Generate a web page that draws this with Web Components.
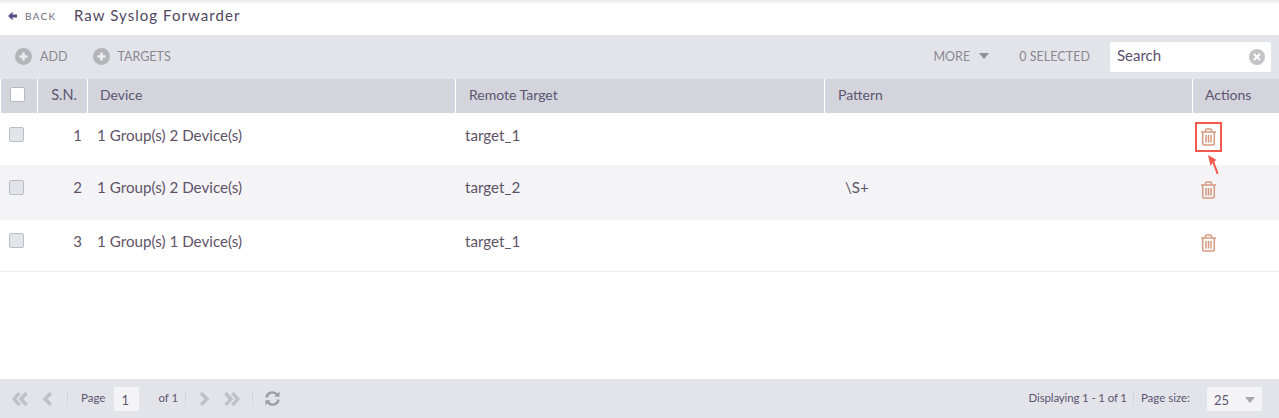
<!DOCTYPE html>
<html>
<head>
<meta charset="utf-8">
<title>Raw Syslog Forwarder</title>
<style>
  html, body { margin: 0; height: 418px; overflow: hidden; background: #fff; }
  body { display: flex; flex-direction: column; font-family: Lato, sans-serif; color: #5a4f6e; }
</style>
</head>
<body>
<title-bar heading="Raw Syslog Forwarder"></title-bar>
<tool-bar></tool-bar>
<grid-row header>
  <span slot="check"><check-box white></check-box></span>
  <span slot="sn">S.N.</span>
  <span slot="device">Device</span>
  <span slot="target">Remote Target</span>
  <span slot="pattern">Pattern</span>
  <span slot="actions">Actions</span>
</grid-row>
<grid-row style="height:52px" offset="-4.5">
  <span slot="check"><check-box></check-box></span>
  <span slot="sn">1</span>
  <span slot="device">1 Group(s) 2 Device(s)</span>
  <span slot="target">target_1</span>
  <span slot="actions"><trash-icon marked></trash-icon></span>
</grid-row>
<grid-row style="height:55px" alt offset="-5.5">
  <span slot="check"><check-box></check-box></span>
  <span slot="sn">2</span>
  <span slot="device">1 Group(s) 2 Device(s)</span>
  <span slot="target">target_2</span>
  <span slot="pattern">\S+</span>
  <span slot="actions"><trash-icon></trash-icon></span>
</grid-row>
<grid-row style="height:51px;border-bottom:1px solid #f0f0f3" offset="-5">
  <span slot="check"><check-box></check-box></span>
  <span slot="sn">3</span>
  <span slot="device">1 Group(s) 1 Device(s)</span>
  <span slot="target">target_1</span>
  <span slot="actions"><trash-icon></trash-icon></span>
</grid-row>
<pager-bar></pager-bar>

<script>
class TitleBar extends HTMLElement {
  constructor() {
    super();
    this.attachShadow({ mode: "open" });
    this.shadowRoot.innerHTML = `
      <style>
        :host {
          display: flex;
          align-items: center;
          height: 35px;
          flex: none;
          box-sizing: border-box;
          padding: 0 0 3px 8px;
          background: linear-gradient(#e9e9ec, #fff 4px);
        }
        svg { width: 10px; height: 10px; margin-right: 7px; }
        .back { font-size: 10px; letter-spacing: 1.3px; color: #6f6a7c; width: 49px; }
        .name { font-size: 15px; letter-spacing: 1.05px; color: #4f4660; margin-top: -2px; }
      </style>
      <svg viewBox="0 0 10 10"><path d="M0 5 L4.6 .8 V3.4 H9 V6.6 H4.6 V9.2 Z" fill="#5b4f86"/></svg>
      <span class="back">BACK</span>
      <span class="name">${this.getAttribute("heading")}</span>
    `;
  }
}

const plusIcon = `<svg width="17" height="17" viewBox="0 0 17 17"><circle cx="8.5" cy="8.5" r="8.5" fill="#b4b4b8"/><path d="M8.5 4.5v8M4.5 8.5h8" stroke="#ecedf0" stroke-width="2.6"/></svg>`;

class ToolBar extends HTMLElement {
  constructor() {
    super();
    this.attachShadow({ mode: "open" });
    this.shadowRoot.innerHTML = `
      <style>
        :host {
          display: flex;
          align-items: center;
          height: 44px;
          flex: none;
          box-sizing: border-box;
          padding-bottom: 2px;
          background: #e3e4ea;
          font-size: 12.5px;
          color: #8b8790;
        }
        svg { flex: none; }
        .add { margin-left: 15px; display: flex; align-items: center; gap: 8px; }
        .targets { margin-left: 26px; display: flex; align-items: center; gap: 7px; }
        .spacer { flex: 1; }
        .more { display: flex; align-items: center; gap: 9px; }
        .sel { margin-left: 30px; letter-spacing: 0.05px; }
        .search {
          display: flex;
          align-items: center;
          justify-content: space-between;
          box-sizing: border-box;
          width: 161px;
          height: 30px;
          margin: 2px 8px 0 20px;
          padding: 0 6px 0 7px;
          background: #fff;
          border-radius: 2px;
          font-size: 15px;
          color: #5a4f6e;
        }
        .search span { margin-bottom: 4px; }
      </style>
      <span class="add">${plusIcon}ADD</span>
      <span class="targets">${plusIcon}TARGETS</span>
      <span class="spacer"></span>
      <span class="more">MORE <svg width="10" height="6" viewBox="0 0 10 6"><path d="M0 0h10L5 6z" fill="#8f8f98"/></svg></span>
      <span class="sel">0 SELECTED</span>
      <span class="search"><span>Search</span>
        <svg width="16" height="16" viewBox="0 0 16 16"><circle cx="8" cy="8" r="8" fill="#c4c4c8"/><path d="M5 5l6 6M11 5l-6 6" stroke="#fff" stroke-width="2"/></svg>
      </span>
    `;
  }
}

class GridRow extends HTMLElement {
  constructor() {
    super();
    this.attachShadow({ mode: "open" });
    const header = this.hasAttribute("header");
    const alt = this.hasAttribute("alt");
    const offset = this.getAttribute("offset") || "0";
    this.shadowRoot.innerHTML = `
      <style>
        :host {
          display: grid;
          grid-template-columns: 37px 50px 368px 369px 368px 1fr;
          flex: none;
          box-sizing: content-box;
          ${header ? "height: 34px;" : ""}
          background: ${header ? "#d3d4dc" : alt ? "#f4f4f7" : "#fff"};
          font-size: ${header ? "14px" : "15.2px"};
          color: ${header ? "#5d5470" : "#5f5268"};
        }
        .c {
          display: flex;
          align-items: center;
          box-sizing: border-box;
          min-width: 0;
          padding-bottom: ${header ? "4" : -offset * 2}px;
          ${header ? "border-left: 1px solid #fff;" : ""}
        }
        .c:first-child { border-left: 0; padding-bottom: ${header ? "2" : -offset * 2}px; }
        .check { padding-left: 9px; }
        .sn { justify-content: flex-end; padding-right: ${header ? "10px" : "5px"}; font-size: ${header ? "14.5px" : "15px"}; }
        .device { padding-left: ${header ? "12px" : "10px"}; }
        .target { padding-left: ${header ? "13px" : "10px"}; }
        .pattern { padding-left: ${header ? "13px" : "21px"}; }
        .actions { padding-left: ${header ? "12px" : "3px"}; }
      </style>
      <div class="c check"><slot name="check"></slot></div>
      <div class="c sn"><slot name="sn"></slot></div>
      <div class="c device"><slot name="device"></slot></div>
      <div class="c target"><slot name="target"></slot></div>
      <div class="c pattern"><slot name="pattern"></slot></div>
      <div class="c actions"><slot name="actions"></slot></div>
    `;
  }
}

class CheckBox extends HTMLElement {
  constructor() {
    super();
    this.attachShadow({ mode: "open" });
    const white = this.hasAttribute("white");
    this.shadowRoot.innerHTML = `
      <style>
        :host {
          display: block;
          box-sizing: border-box;
          width: 15px;
          height: 15px;
          border-radius: 2px;
          border: 1px solid ${white ? "#b8b8c0" : "#bcbcc4"};
          background: ${white ? "#fff" : "#e3e4ea"};
        }
      </style>
    `;
  }
}

class TrashIcon extends HTMLElement {
  constructor() {
    super();
    this.attachShadow({ mode: "open" });
    this.shadowRoot.innerHTML = `
      <style>
        :host {
          display: block;
          position: relative;
          width: 27px;
          height: 30px;
          box-sizing: border-box;
          padding: 6px 0 0 5px;
          margin-top: 5px;
        }
        :host([marked]) { outline: 2px solid #f4594d; outline-offset: -2px; }
        svg { display: block; }
        .arrow { position: absolute; left: 12px; top: 32px; }
      </style>
      <svg width="17" height="18" viewBox="0 0 17 18" fill="none" stroke="#d69a80" stroke-width="1.5">
        <path d="M1 4h15M5.5 4V2Q5.5 1 6.7 1h3.6q1.2 0 1.2 1V4"/>
        <path d="M2.7 4v11.5q0 1.5 1.5 1.5h8.6q1.5 0 1.5-1.5V4"/>
        <path d="M6 7v7.5M8.5 7v7.5M11 7v7.5"/>
      </svg>
      ${this.hasAttribute("marked") ? `<svg class="arrow" width="12" height="21" viewBox="0 0 12 21"><path d="M1 1L9.5 6 7.2 7.5 11.5 19.5 9.7 20.2 5.5 8.8 3.5 12Z" fill="#f4594d"/></svg>` : ""}
    `;
  }
}

class PagerBar extends HTMLElement {
  constructor() {
    super();
    this.attachShadow({ mode: "open" });
    const chev = (d, w) => `<svg width="${w}" height="16" viewBox="0 0 ${w} 16" fill="none" stroke="#c0c0c5" stroke-width="3.4"><path d="${d}"/></svg>`;
    this.shadowRoot.innerHTML = `
      <style>
        :host {
          display: flex;
          align-items: center;
          height: 39px;
          flex: none;
          margin-top: auto;
          background: #e3e4ea;
          font-size: 11.5px;
          color: #5d5470;
        }
        svg { flex: none; display: block; }
        .sep { width: 0; height: 14px; border-left: 1px dotted #c8c8ce; flex: none; }
        .page-in {
          box-sizing: border-box;
          width: 25px;
          height: 24px;
          margin-left: 9px;
          padding: 5px 0 0 7px;
          background: #f4f4f6;
          font-size: 13px;
        }
        .size {
          display: flex;
          align-items: center;
          justify-content: space-between;
          box-sizing: border-box;
          width: 55px;
          height: 24px;
          margin: 0 17px 0 17px;
          padding: 2px 7px 0 7px;
          background: #f4f4f6;
          font-size: 13px;
        }
        .spacer { flex: 1; }
      </style>
      <span style="margin-left:12px">${chev("M7.5 2L2 8l5.5 6M14.5 2L9 8l5.5 6", 16)}</span>
      <span style="margin-left:14px">${chev("M9 2L3 8l6 6", 11)}</span>
      <span class="sep" style="margin-left:14px"></span>
      <span style="margin-left:13px;margin-bottom:2px">Page</span>
      <span class="page-in">1</span>
      <span style="margin-left:19px;margin-bottom:2px">of 1</span>
      <span class="sep" style="margin-left:7px"></span>
      <span style="margin-left:13px">${chev("M2 2l6 6-6 6", 11)}</span>
      <span style="margin-left:14px">${chev("M1.5 2L7 8l-5.5 6M8.5 2L14 8l-5.5 6", 16)}</span>
      <span class="sep" style="margin-left:12px"></span>
      <span style="margin-left:12px"><svg width="15" height="15" viewBox="0 0 15 15" fill="none" stroke="#9c9ca2" stroke-width="2.4"><path d="M1.5 6.5A6 6 0 0 1 12 3.5M13.5 8.5A6 6 0 0 1 3 11.5"/><path d="M14.5 .5v5.2H9.3zM.5 14.5V9.3h5.2z" fill="#9c9ca2" stroke="none"/></svg></span>
      <span class="spacer"></span>
      <span style="margin-bottom:2px;letter-spacing:-0.15px">Displaying 1 - 1 of 1</span>
      <span class="sep" style="margin-left:6px"></span>
      <span style="margin-left:7px;margin-bottom:2px">Page size:</span>
      <span class="size">25 <svg width="10" height="6" viewBox="0 0 10 6"><path d="M0 0h10L5 6z" fill="#a8a8b0"/></svg></span>
    `;
  }
}

customElements.define("title-bar", TitleBar);
customElements.define("tool-bar", ToolBar);
customElements.define("grid-row", GridRow);
customElements.define("check-box", CheckBox);
customElements.define("trash-icon", TrashIcon);
customElements.define("pager-bar", PagerBar);
</script>
</body>
</html>
